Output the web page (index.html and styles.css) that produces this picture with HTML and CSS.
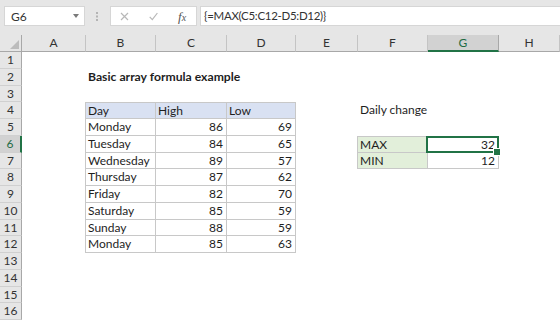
FILE: index.html
```html
<!DOCTYPE html>
<html>
<head>
<meta charset="utf-8">
<link rel="stylesheet" href="styles.css">
</head>
<body>
<div class="formula-bar">
  <div class="namebox"><span>G6</span><span class="caret"></span></div>
  <svg class="grip" width="2" height="9" viewBox="0 0 2 9"><rect x="0" y="0" width="2" height="2" fill="#b4b4b4"/><rect x="0" y="3.5" width="2" height="2" fill="#b4b4b4"/><rect x="0" y="7" width="2" height="2" fill="#b4b4b4"/></svg>
  <div class="fxbox">
    <svg class="ico-x" width="9" height="9" viewBox="0 0 9 9"><path d="M1 1L8 8M8 1L1 8" stroke="#b8b8b8" stroke-width="1.2" fill="none"/></svg>
    <svg class="ico-check" width="9" height="9" viewBox="0 0 9 9"><path d="M0.7 4.8L3.3 7.6L8.4 1" stroke="#b8b8b8" stroke-width="1.2" fill="none"/></svg>
    <span class="fx">f<span class="fx-x">x</span></span>
  </div>
  <div class="formula">{=MAX(C5:C12-D5:D12)}</div>
</div>
<div class="sheet">
  <div class="corner"><span class="tri"></span></div><div class="ch">A</div><div class="ch">B</div><div class="ch">C</div><div class="ch">D</div><div class="ch">E</div><div class="ch">F</div><div class="ch sel">G</div><div class="ch">H</div>

  <div class="rh">1</div><div></div><div></div><div></div><div></div><div></div><div></div><div></div><div></div>
  <div class="rh">2</div><div></div><div class="c title">Basic array formula example</div><div></div><div></div><div></div><div></div><div></div><div></div>
  <div class="rh">3</div><div></div><div></div><div></div><div></div><div></div><div></div><div></div><div></div>
  <div class="rh">4</div><div class="edge"></div><div class="c t th">Day</div><div class="c t th">High</div><div class="c t th">Low</div><div></div><div class="c">Daily change</div><div></div><div></div>
  <div class="rh">5</div><div class="edge"></div><div class="c t">Monday</div><div class="c t n">86</div><div class="c t n">69</div><div></div><div></div><div></div><div></div>
  <div class="rh sel">6</div><div class="edge"></div><div class="c t">Tuesday</div><div class="c t n">84</div><div class="c t n">65</div><div class="edge"></div><div class="c box top lbl">MAX</div><div class="c box top n active">32</div><div></div>
  <div class="rh">7</div><div class="edge"></div><div class="c t">Wednesday</div><div class="c t n">89</div><div class="c t n">57</div><div class="edge"></div><div class="c box lbl">MIN</div><div class="c box n">12</div><div></div>
  <div class="rh">8</div><div class="edge"></div><div class="c t">Thursday</div><div class="c t n">87</div><div class="c t n">62</div><div></div><div></div><div></div><div></div>
  <div class="rh">9</div><div class="edge"></div><div class="c t">Friday</div><div class="c t n">82</div><div class="c t n">70</div><div></div><div></div><div></div><div></div>
  <div class="rh">10</div><div class="edge"></div><div class="c t">Saturday</div><div class="c t n">85</div><div class="c t n">59</div><div></div><div></div><div></div><div></div>
  <div class="rh">11</div><div class="edge"></div><div class="c t">Sunday</div><div class="c t n">88</div><div class="c t n">59</div><div></div><div></div><div></div><div></div>
  <div class="rh">12</div><div class="edge"></div><div class="c t">Monday</div><div class="c t n">85</div><div class="c t n">63</div><div></div><div></div><div></div><div></div>
  <div class="rh">13</div><div></div><div></div><div></div><div></div><div></div><div></div><div></div><div></div>
  <div class="rh">14</div><div></div><div></div><div></div><div></div><div></div><div></div><div></div><div></div>
  <div class="rh">15</div><div></div><div></div><div></div><div></div><div></div><div></div><div></div><div></div>
  <div class="rh">16</div><div></div><div></div><div></div><div></div><div></div><div></div><div></div><div></div>
</div>
</body>
</html>
```
FILE: styles.css
```css
html, body {
  margin: 0;
  padding: 0;
}
body {
  width: 560px;
  height: 320px;
  overflow: hidden;
  background: #fff;
  font-family: Lato, "Noto Sans", sans-serif;
  color: #1e1e1e;
}
* { box-sizing: border-box; }

.formula-bar {
  display: flex;
  align-items: flex-start;
  height: 35px;
  background: #e6e6e6;
  padding: 6px 0 0 4px;
}
.namebox {
  width: 81px;
  height: 20px;
  background: #fff;
  border: 1px solid #d6d6d6;
  display: flex;
  align-items: center;
  justify-content: space-between;
  padding: 0 5px 0 6px;
  font-size: 12px;
  color: #333;
}
.caret {
  width: 0;
  height: 0;
  border-left: 3.5px solid transparent;
  border-right: 3.5px solid transparent;
  border-top: 4px solid #7a7a7a;
}
.grip {
  margin: 6px 0 0 11px;
}
.fxbox {
  margin-left: 12px;
  width: 87px;
  height: 20px;
  background: #fff;
  border: 1px solid #d6d6d6;
  display: flex;
  align-items: center;
  padding-left: 9px;
}
.ico-check { margin-left: 20px; }
.fx {
  margin-left: 20px;
  font-family: "Liberation Serif", serif;
  font-style: italic;
  font-size: 13px;
  color: #555;
  line-height: 1;
}
.fx-x { font-size: 10px; }
.formula {
  flex: 1;
  height: 20px;
  margin-left: 3px;
  background: #fff;
  border: 1px solid #d6d6d6;
  border-right: 0;
  padding-left: 3px;
  font-size: 11.5px;
  letter-spacing: -0.3px;
  line-height: 18px;
  color: #333;
}

.sheet {
  display: grid;
  grid-template-columns: 22px 64px 70px 71px 69px 62px 70px 71px 61px;
  grid-template-rows: 17px repeat(16, 16.75px);
  font-size: 12px;
}
.corner {
  background: #e6e6e6;
  border-right: 1px solid #a8a8a8;
  border-bottom: 1px solid #a8a8a8;
  position: relative;
}
.tri {
  position: absolute;
  right: 2px;
  bottom: 2px;
  width: 0;
  height: 0;
  border-left: 9px solid transparent;
  border-bottom: 9px solid #bcbcbc;
}
.ch {
  background: #e6e6e6;
  border-right: 1px solid #c4c4c4;
  border-bottom: 1px solid #a8a8a8;
  text-align: center;
  line-height: 16px;
  color: #333;
}
.ch.sel {
  background: #d2d2d2;
  border-right-color: #a8a8a8;
  border-bottom: 2px solid #217346;
  color: #1e6b43;
}
.rh {
  background: #e6e6e6;
  border-right: 1px solid #a8a8a8;
  border-bottom: 1px solid #d0d0d0;
  text-align: center;
  line-height: 16px;
  color: #333;
}
.rh.sel {
  background: #d2d2d2;
  border-right: 2px solid #217346;
  color: #1e6b43;
}
.c {
  white-space: nowrap;
  overflow: visible;
  padding: 0 3px 0 2px;
  line-height: 16.75px;
}
.n { text-align: right; }
.title { font-weight: bold; font-size: 12.2px; }
.edge { border-right: 1px solid #c8c8c8; }
.t {
  border-right: 1px solid #c8c8c8;
  border-bottom: 1px solid #c8c8c8;
}
.th {
  background: #d9e1f2;
  border-top: 1px solid #c8c8c8;
}
.box {
  border-right: 1px solid #c8c8c8;
  border-bottom: 1px solid #c8c8c8;
}
.box.top { border-top: 1px solid #c8c8c8; }
.lbl { background: #e2efda; }
.active { position: relative; }
.active::after {
  content: "";
  position: absolute;
  left: -2px;
  top: -1px;
  right: -1px;
  bottom: -1px;
  border: 2px solid #217346;
}
.active::before {
  content: "";
  position: absolute;
  right: -3px;
  bottom: -4px;
  width: 6px;
  height: 6px;
  background: #217346;
  border: 1px solid #fff;
  z-index: 1;
}
```
